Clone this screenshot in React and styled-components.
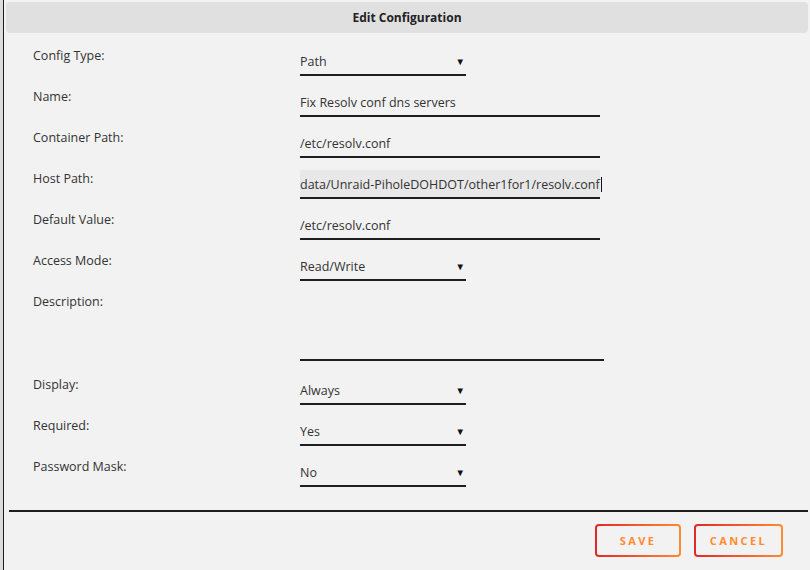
import styled, { createGlobalStyle } from 'styled-components';

const GlobalStyle = createGlobalStyle`
	html, body {
		margin: 0;
		padding: 0;
		background: #dcdcdc;
		font-family: "Open Sans", "Noto Sans", sans-serif;
	}
`;

const Modal = styled.div`
	margin-left: 3px;
	border-left: 1px solid #1c1c1c;
	background: #f2f2f2;
	height: 570px;
	box-sizing: border-box;
	padding: 2px 2px 0 2px;
	display: flex;
	flex-direction: column;
`;

const TitleBar = styled.div`
	height: 31px;
	background: #e0e0e0;
	border-radius: 4px;
	display: flex;
	align-items: center;
	justify-content: center;
	font-size: 12px;
	font-weight: 700;
	color: #222;
`;

const Body = styled.div`
	padding: 14px 0 0 27px;
	display: flex;
	flex-direction: column;
	gap: 12px;
`;

const Row = styled.div`
	display: flex;
	align-items: flex-start;
	margin-top: ${({ $mt }) => $mt || 0}px;
`;

const Label = styled.div`
	width: 267px;
	font-size: 12.5px;
	line-height: 18px;
	color: #333;
`;

const Field = styled.div`
	width: ${({ $w }) => $w}px;
	height: ${({ $h }) => $h || 26}px;
	padding-top: 1px;
	border-bottom: 2px solid #1e1e1e;
	background: ${({ $bg }) => $bg || 'transparent'};
	display: flex;
	align-items: center;
	justify-content: ${({ $tight }) => ($tight ? 'flex-start' : 'space-between')};
	font-size: 12.5px;
	color: #333;
	white-space: nowrap;
`;

const Arrow = styled.span`
	font-size: 9.5px;
	color: #111;
	margin-right: 1px;
`;

const Caret = styled.span`
	display: inline-block;
	width: 1px;
	height: 15px;
	background: #111;
	margin-left: 1px;
	flex-shrink: 0;
`;

const Divider = styled.div`
	margin: 23px 0 0 3px;
	border-top: 2px solid #1e1e1e;
`;

const Footer = styled.div`
	display: flex;
	justify-content: flex-end;
	gap: 13px;
	padding: 12px 25px 0 0;
`;

const Button = styled.button`
	width: ${({ $w }) => $w}px;
	height: 33px;
	padding: 2px;
	border: none;
	border-radius: 4px;
	background: linear-gradient(90deg, #e22828 0%, #ff8b2f 100%);
	cursor: pointer;
	font-family: inherit;
`;

const ButtonInner = styled.span`
	display: flex;
	align-items: center;
	justify-content: center;
	height: 100%;
	border-radius: 2px;
	background: #f2f2f2;
	font-size: 11px;
	font-weight: 700;
	letter-spacing: 2.4px;
	color: #ff8b2f;
`;

const selectRow = (label, value, mt) => (
	<Row key={label} $mt={mt}>
		<Label>{label}</Label>
		<Field $w={166}>
			<span>{value}</span>
			<Arrow>▼</Arrow>
		</Field>
	</Row>
);

const textRow = (label, value) => (
	<Row key={label}>
		<Label>{label}</Label>
		<Field $w={300}>
			<span>{value}</span>
		</Field>
	</Row>
);

const App = () => (
	<>
		<GlobalStyle />
		<Modal>
			<TitleBar>Edit Configuration</TitleBar>
			<Body>
				{selectRow('Config Type:', 'Path')}
				{textRow('Name:', 'Fix Resolv conf dns servers')}
				{textRow('Container Path:', '/etc/resolv.conf')}
				<Row>
					<Label>Host Path:</Label>
					<Field $w={300} $bg="#e8e8e8" $tight>
						<span>data/Unraid-PiholeDOHDOT/other1for1/resolv.conf</span>
						<Caret />
					</Field>
				</Row>
				{textRow('Default Value:', '/etc/resolv.conf')}
				{selectRow('Access Mode:', 'Read/Write')}
				<Row>
					<Label>Description:</Label>
					<Field $w={304} $h={65} />
				</Row>
				{selectRow('Display:', 'Always', 3)}
				{selectRow('Required:', 'Yes')}
				{selectRow('Password Mask:', 'No')}
			</Body>
			<Divider />
			<Footer>
				<Button $w={86}>
					<ButtonInner>SAVE</ButtonInner>
				</Button>
				<Button $w={89}>
					<ButtonInner>CANCEL</ButtonInner>
				</Button>
			</Footer>
		</Modal>
	</>
);

export default App;
